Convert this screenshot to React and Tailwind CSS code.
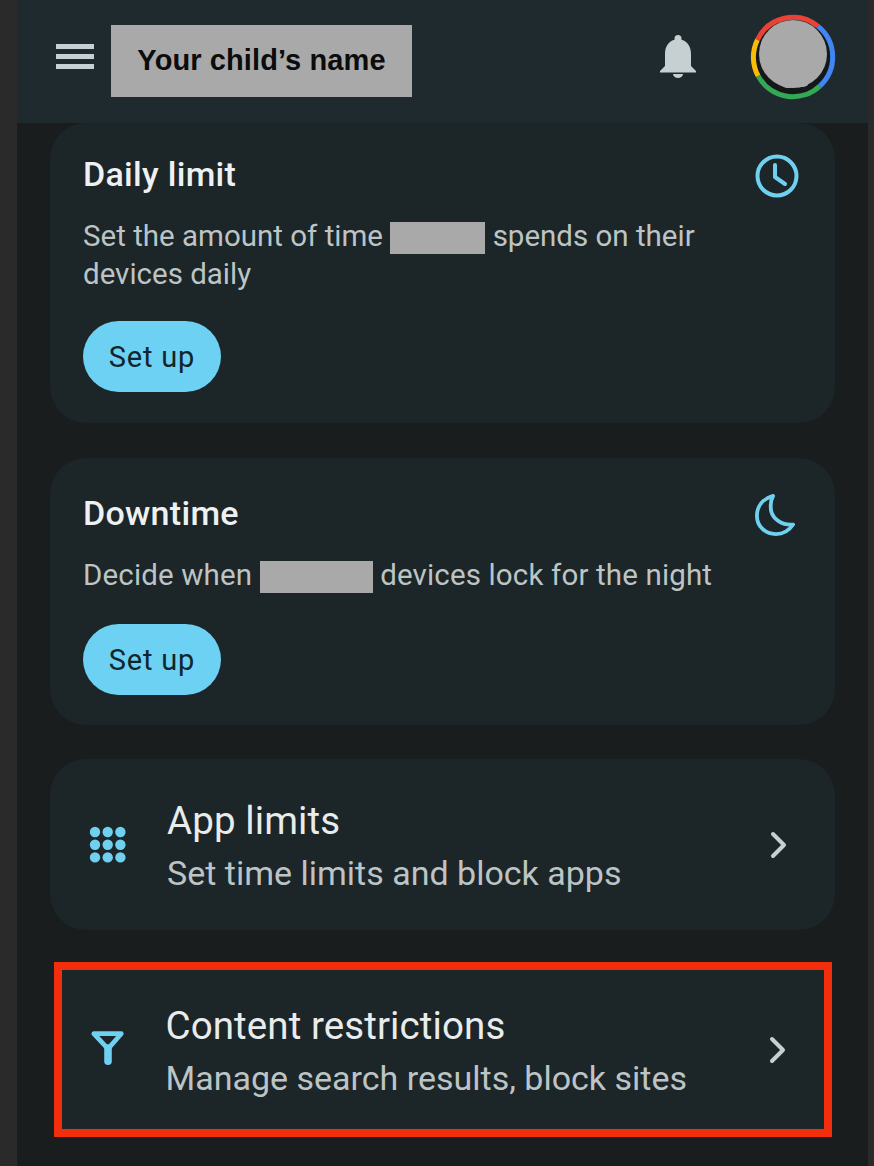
import React from "react";

const cyan = "#6fd0f0";

function Redact({ width }) {
  return <span className={`inline-block h-[32px] align-middle bg-[#a9a9a9] ${width}`}></span>;
}

function SetUp() {
  return (
    <button className="w-[138px] h-[71px] pt-[3px] rounded-[36px] bg-[#6cd1f2] text-[#10252c] text-[29px] tracking-[0.8px]">
      Set up
    </button>
  );
}

function Chevron() {
  return (
    <svg width="20" height="28" viewBox="0 0 20 28" fill="none" stroke="#c8cfd0" strokeWidth="4" strokeLinecap="round" strokeLinejoin="round">
      <path d="M4 3 L15 14 L4 25" />
    </svg>
  );
}

function GridIcon() {
  const dots = [];
  for (let y = 0; y < 3; y++) {
    for (let x = 0; x < 3; x++) {
      dots.push(<circle key={`${x}-${y}`} cx={6 + x * 12.7} cy={6 + y * 12.7} r="5.2" fill={cyan} />);
    }
  }
  return (
    <svg width="38" height="38" viewBox="0 0 38 38">
      {dots}
    </svg>
  );
}

function FilterIcon() {
  return (
    <svg className="ml-[2px] -mt-[5px]" width="38" height="38" viewBox="0 0 38 38" fill="none" stroke={cyan} strokeWidth="5" strokeLinejoin="round" strokeLinecap="round">
      <path d="M4 5 H33 L19 21 Z" />
      <path d="M19 20 V34" strokeWidth="8" />
    </svg>
  );
}

function RowContent({ icon, title, sub }) {
  return (
    <div className="flex items-center w-full">
      <div className="w-[38px] flex justify-center shrink-0">{icon}</div>
      <div className="ml-[40px] flex-1 pt-[1px]">
        <div className="text-[38.5px] leading-[48px] tracking-[0.1px] text-[#e8ecec]">{title}</div>
        <div className="mt-[7px] text-[34px] leading-[42px] text-[#bcc4c5]">{sub}</div>
      </div>
      <Chevron />
    </div>
  );
}

export default function App() {
  return (
    <div className="flex w-[874px] h-[1166px] overflow-hidden bg-[#2a2a2a]" style={{ fontFamily: "Roboto, sans-serif" }}>
      <div className="w-[17px] shrink-0"></div>
      <div className="w-[851px] shrink-0 bg-[#191d1e] flex flex-col">
        <header className="h-[123px] bg-[#1f2a2f] flex items-start pl-[39px] pr-[32px] shrink-0">
          <svg className="mt-[44px]" width="38" height="26" viewBox="0 0 38 26" fill="#c6d0d2">
            <rect x="0" y="0" width="38" height="5" />
            <rect x="0" y="10" width="38" height="5" />
            <rect x="0" y="20" width="38" height="5" />
          </svg>
          <div
            className="ml-[17px] mt-[25px] w-[301px] h-[72px] bg-[#a9a9a9] flex items-center justify-center text-[29px] tracking-[0.1px] font-bold text-[#0c0c0c]"
            style={{ fontFamily: '"Liberation Sans", sans-serif' }}
          >
            Your child’s name
          </div>
          <svg className="ml-auto mt-[34px]" width="36" height="44" viewBox="0 0 36 44" fill="#c6d0d2">
            <path d="M18 1 a3.5 3.5 0 0 1 3.5 3.5 v1.2 C28 7.5 31 13 31 20 V32 L36 37 V38.5 H0 V37 L5 32 V20 C5 13 8 7.5 14.5 5.7 V4.5 A3.5 3.5 0 0 1 18 1 Z" />
            <path d="M13 40 H23 A5 4 0 0 1 13 40 Z" />
          </svg>
          <svg className="ml-[54px] mt-[14px]" width="86" height="86" viewBox="0 0 86 86" fill="none" strokeWidth="5">
            <circle cx="43" cy="43" r="37" fill="#15181a" />
            <path d="M7.4 25.8 A39.5 39.5 0 0 1 67.9 12.1" stroke="#ea4335" />
            <path d="M67.9 12.1 A39.5 39.5 0 0 1 69.8 72.1" stroke="#4285f4" />
            <path d="M69.8 72.1 A39.5 39.5 0 0 1 8.1 61.9" stroke="#34a853" />
            <path d="M8.1 61.9 A39.5 39.5 0 0 1 7.4 25.8" stroke="#fbbc05" />
            <ellipse cx="38" cy="71" rx="6" ry="3" fill="#d9a98a" />
            <ellipse cx="52" cy="70" rx="6" ry="3" fill="#9fc4d8" />
            <circle cx="43" cy="40" r="34" fill="#a9a9a9" />
          </svg>
        </header>

        <main className="flex-1 flex flex-col items-center pl-[33px] pr-[33px]">
          <section className="w-[785px] h-[300px] shrink-0 bg-[#1c2528] rounded-[36px] pl-[33px] pr-[36px] pt-[30px]">
            <div className="flex justify-between items-start">
              <h2 className="text-[34px] leading-[42px] tracking-[0.3px] font-medium text-[#eef1f1]">Daily limit</h2>
              <svg className="mt-[1px]" width="44" height="44" viewBox="0 0 44 44" fill="none" stroke={cyan} strokeWidth="4" strokeLinecap="round" strokeLinejoin="round">
                <circle cx="22" cy="22" r="19.5" />
                <path d="M20 11 V23 L30 30" />
              </svg>
            </div>
            <p className="mt-[19px] text-[29.5px] leading-[38px] text-[#bcc4c5]">
              Set the amount of time <Redact width="w-[95px]" /> spends on their
              <br />
              devices daily
            </p>
            <div className="mt-[28px]">
              <SetUp />
            </div>
          </section>

          <section className="w-[785px] h-[267px] shrink-0 mt-[35px] bg-[#1c2528] rounded-[36px] pl-[33px] pr-[40px] pt-[34px]">
            <div className="flex justify-between items-start">
              <h2 className="text-[34px] leading-[42px] tracking-[0.3px] font-medium text-[#eef1f1]">Downtime</h2>
              <svg className="mt-[2px]" width="40" height="42" viewBox="0 0 42 44" fill="none" stroke={cyan} strokeWidth="4" strokeLinejoin="round">
                <path d="M19 2 C8 5 2 13 2 23 C2 34 11 42 22 42 C30 42 36 38 40 32 C28 33 19 26 17 18 C16 12 16 7 19 2 Z" />
              </svg>
            </div>
            <p className="mt-[20px] text-[29.5px] leading-[38px] tracking-[0.15px] text-[#bcc4c5]">
              Decide when <Redact width="w-[113px]" /> devices lock for the night
            </p>
            <div className="mt-[30px]">
              <SetUp />
            </div>
          </section>

          <section className="w-[785px] h-[171px] shrink-0 mt-[34px] bg-[#1c2528] rounded-[36px] pl-[39px] pr-[46px] flex items-center">
            <RowContent icon={<GridIcon />} title="App limits" sub="Set time limits and block apps" />
          </section>

          <section className="w-[778px] h-[175px] shrink-0 mt-[32px] bg-[#1c2528] border-[8px] border-[#f32e0c] pl-[26px] pr-[36px] flex items-center">
            <RowContent icon={<FilterIcon />} title="Content restrictions" sub="Manage search results, block sites" />
          </section>
        </main>
      </div>
      <div className="w-[6px] shrink-0"></div>
    </div>
  );
}
